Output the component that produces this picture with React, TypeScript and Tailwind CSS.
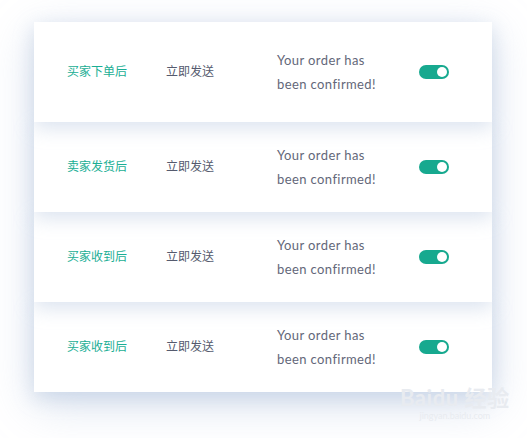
import React from "react";

const rows = [
  { trigger: "买家下单后", tall: true },
  { trigger: "卖家发货后", tall: false },
  { trigger: "买家收到后", tall: false },
  { trigger: "买家收到后", tall: false },
];

const zs = ["z-40", "z-30", "z-20", "z-10"];

const Toggle = () => (
  <div className="flex h-[14px] w-[30px] items-center justify-end rounded-full bg-[#17a98f] pr-[2px]">
    <div className="h-[10px] w-[10px] rounded-full bg-white" />
  </div>
);

export default function App() {
  return (
    <div className="relative h-[438px] w-[527px] bg-white pl-[34px] pt-[22px] font-['Lato','Noto_Sans_CJK_SC',sans-serif]">
      <div className="w-[458px] shadow-[0_12px_44px_rgba(160,182,214,0.4)]">
        {rows.map((r, i) => (
          <div
            key={i}
            className={`relative ${zs[i]} flex items-center bg-white pl-[33px] shadow-[0_6px_18px_rgba(165,185,215,0.4)] ${r.tall ? "h-[100px]" : "h-[90px]"}`}
          >
            <div className="w-[99px] text-[12px] text-[#1aae94]">{r.trigger}</div>
            <div className="w-[111px] text-[12px] text-[#555a6e]">立即发送</div>
            <div className="w-[142px] text-[13px] leading-[24px] tracking-[0.4px] text-[#636779]">
              Your order has
              <br />
              been confirmed!
            </div>
            <Toggle />
          </div>
        ))}
      </div>
      <div className="absolute left-[400px] top-[386px] z-50 flex flex-col items-center text-[#e8ebf0]">
        <div className="text-[22px] font-bold leading-[24px] tracking-wide">Baidu 经验</div>
        <div className="text-[9px] leading-[12px]">jingyan.baidu.com</div>
      </div>
    </div>
  );
}
